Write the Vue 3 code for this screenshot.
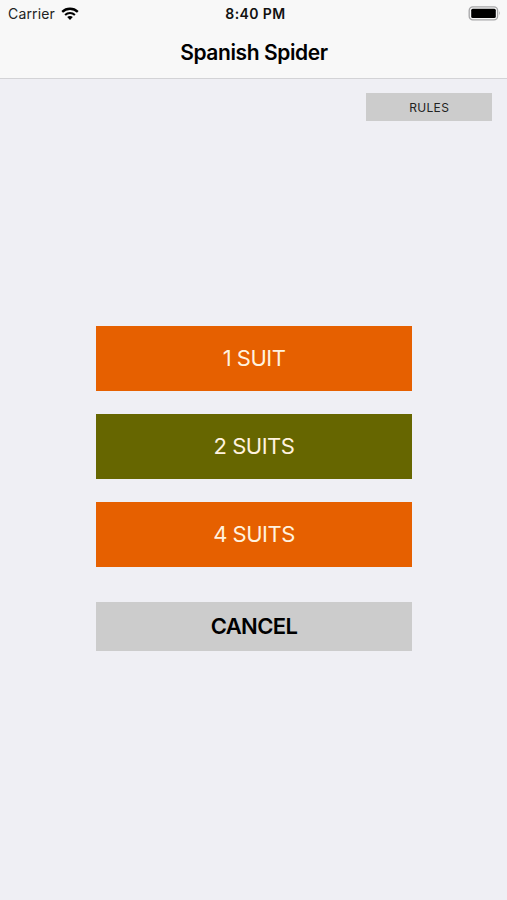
<script setup>

import { ref } from 'vue'
const emit = defineEmits(['startGame', 'showRules', 'cancel'])

const games = ref([
    { suits: 1, label: "1 SUIT" },
    { suits: 2, label: "2 SUITS" },
    { suits: 4, label: "4 SUITS" }
])

</script>

<template>
    <div class="screen">
        <header class="header">
            <div class="status">
                <div class="status__left">
                    <span class="carrier">Carrier</span>
                    <svg class="wifi" width="18" height="13" viewBox="0 0 18 13">
                        <path d="M1.2 4.9 C5.6 .7 12.4 .7 16.8 4.9" fill="none" stroke="#000" stroke-width="2.3" />
                        <path d="M4.1 8 C6.9 5.4 11.1 5.4 13.9 8" fill="none" stroke="#000" stroke-width="2.1" />
                        <path d="M6.2 10.1 C7.8 8.7 10.2 8.7 11.8 10.1 L9 12.9 Z" fill="#000" />
                    </svg>
                </div>
                <span class="time">8:40 PM</span>
                <svg class="battery" width="33" height="15" viewBox="0 0 33 15">
                    <rect x="1.2" y=".8" width="28.4" height="13" rx="3.6" fill="none" stroke="#a6a6a8" stroke-width="1.3" />
                    <rect x="3.2" y="2.7" width="24.6" height="9.3" rx="1.5" fill="#000" />
                    <path d="M31 5 Q32.8 7.3 31 9.6 Z" fill="#a6a6a8" />
                </svg>
            </div>
            <div class="title">Spanish Spider</div>
        </header>

        <div class="toolbar">
            <button @click="emit('showRules')" class="button button--rules">RULES</button>
        </div>

        <div class="menu">
            <button @click="emit('startGame', game.suits)" class="button button--game" v-for="game in games" :key="game.suits">
                <span>{{game.label}}</span>
            </button>
            <button @click="emit('cancel')" class="button button--cancel"><span>CANCEL</span></button>
        </div>
    </div>
</template>

<style>

body {
    background: #efeff4;
}

</style>

<style scoped>

.screen {
    height: 900px;
    overflow: hidden;
    background: #efeff4;
    color: #000;
    font-family: Inter, "Liberation Sans", sans-serif;
}

.header {
    box-sizing: border-box;
    height: 79.4px;
    background: #f8f8f8;
    border-bottom: 1px solid #d3d3d6;
}

.status {
    display: grid;
    grid-template-columns: 1fr auto 1fr;
    align-items: center;
    height: 27px;
    padding: 0 6px 0 8px;
}

.status__left {
    display: flex;
    align-items: center;
    gap: 6px;
}

.carrier {
    font-size: 14px;
    letter-spacing: 0.15px;
    color: #222;
}

.time {
    padding-left: 2px;
    font-size: 14px;
    font-weight: 600;
    letter-spacing: 0.4px;
    color: #111;
}

.battery {
    justify-self: end;
}

.title {
    font-size: 21px;
    font-weight: 600;
    letter-spacing: -0.4px;
    line-height: 52px;
    padding-left: 1px;
    text-align: center;
}

.toolbar {
    display: flex;
    justify-content: flex-end;
    padding: 14px 14.6px 0 0;
}

.button {
    display: flex;
    justify-content: center;
    align-items: center;
    padding: 0;
    border: none;
    font-family: inherit;
    cursor: pointer;
}

.button--rules {
    width: 126.4px;
    height: 28px;
    background: #cccccc;
    color: #222;
    font-size: 12px;
    letter-spacing: 0.3px;
}

.menu {
    display: flex;
    flex-direction: column;
    width: 316px;
    margin: 204.6px auto 0 96px;
}

.button--game {
    height: 64.6px;
    margin-bottom: 23.4px;
    background: #e66000;
    color: #fff2df;
    font-size: 22px;
    letter-spacing: -0.5px;
}

.button--game:nth-child(2) {
    background: #666600;
}

.button--cancel {
    height: 49.4px;
    margin-top: 11.6px;
    background: #cccccc;
    color: #000;
    font-size: 22px;
    font-weight: 600;
    letter-spacing: -0.6px;
}

</style>
